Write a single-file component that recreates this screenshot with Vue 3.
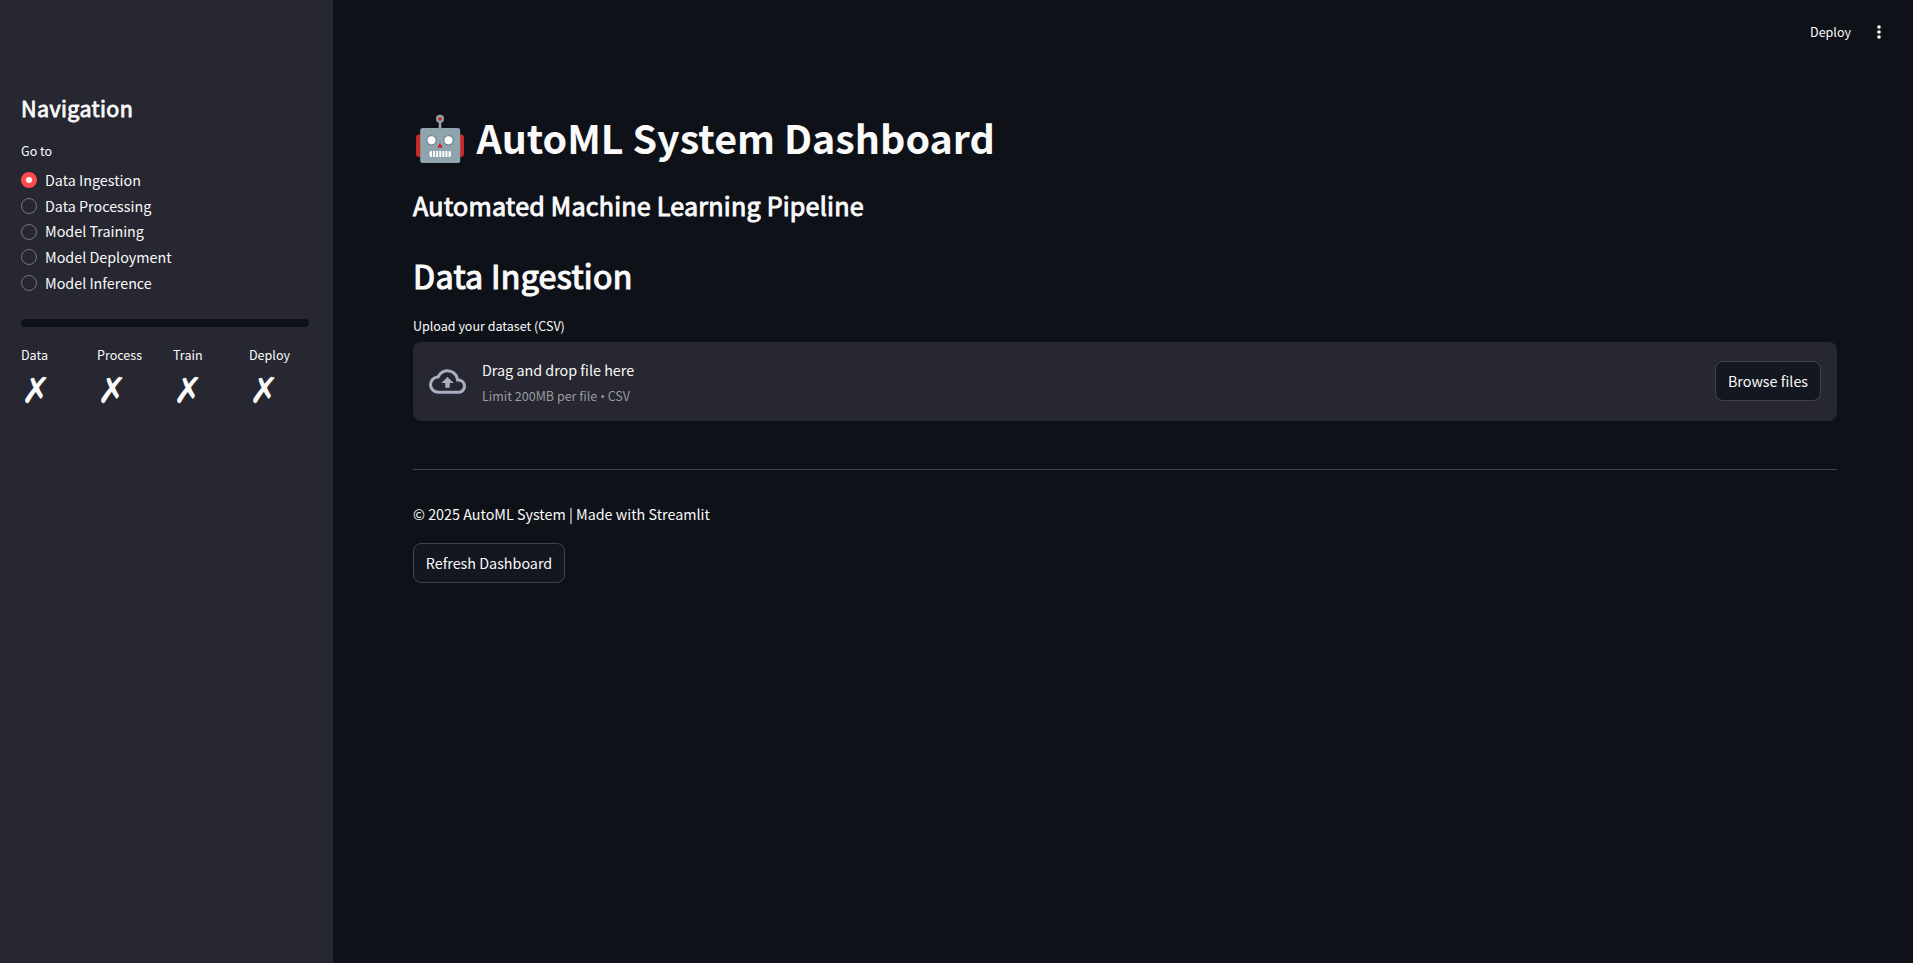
<script setup>
import { ref } from 'vue'
const pages = ['Data Ingestion', 'Data Processing', 'Model Training', 'Model Deployment', 'Model Inference']
const selected = ref('Data Ingestion')
const stages = ['Data', 'Process', 'Train', 'Deploy']
</script>

<template>
  <div class="app">
    <aside class="sidebar">
      <h2 class="nav-title">Navigation</h2>
      <p class="label goto">Go to</p>
      <div class="radios">
        <label v-for="p in pages" :key="p" class="radio" @click="selected = p">
          <span class="dot" :class="{ on: selected === p }"></span><span class="name">{{ p }}</span>
        </label>
      </div>
      <div class="progress"></div>
      <div class="metrics">
        <div v-for="s in stages" :key="s" class="metric">
          <div class="label">{{ s }}</div>
          <div class="mark">✗</div>
        </div>
      </div>
    </aside>
    <main class="main">
      <header class="toolbar">
        <span class="label deploy">Deploy</span>
        <svg class="dots" width="16" height="16" viewBox="0 0 16 16" fill="#fafafa"><circle cx="8" cy="3" r="1.8" /><circle cx="8" cy="8" r="1.8" /><circle cx="8" cy="13" r="1.8" /></svg>
      </header>
      <div class="content">
        <h1 class="title">
          <svg class="robot" width="50" height="50" viewBox="0 0 50 50">
            <path d="M25 7v8" stroke="#90a4ae" stroke-width="2.6" />
            <circle cx="25" cy="4.8" r="4" fill="#90a4ae" /><circle cx="25" cy="4.8" r="1.9" fill="#c62828" />
            <rect x="1" y="20.5" width="8" height="22.5" rx="3" fill="#c62828" /><rect x="41" y="20.5" width="8" height="22.5" rx="3" fill="#c62828" />
            <rect x="5.2" y="14" width="40" height="35" rx="2.5" fill="#90a4ae" />
            <circle cx="16.5" cy="26.3" r="4.7" fill="#fff" stroke="#6f7f87" stroke-width="1.2" />
            <circle cx="33.5" cy="26.3" r="4.7" fill="#fff" stroke="#6f7f87" stroke-width="1.2" />
            <path d="M25 28.8l2.8 5h-5.6z" fill="#c62828" />
            <rect x="14.5" y="37" width="21.5" height="6" rx="2" fill="#fff" />
            <path d="M17.6 37v6M20.6 37v6M23.7 37v6M26.8 37v6M29.9 37v6M33 37v6" stroke="#90a4ae" stroke-width="1.1" />
          </svg>
          <span>AutoML System Dashboard</span>
        </h1>
        <h3 class="subtitle">Automated Machine Learning Pipeline</h3>
        <h2 class="section">Data Ingestion</h2>
        <p class="label upload-label">Upload your dataset (CSV)</p>
        <section class="uploader">
          <svg class="cloud" width="37" height="37" viewBox="0 0 24 24" fill="#a9aec2"><path d="M19.35 10.04A7.49 7.49 0 0 0 12 4C9.11 4 6.6 5.64 5.35 8.04A5.994 5.994 0 0 0 0 14c0 3.31 2.69 6 6 6h13c2.76 0 5-2.24 5-5 0-2.64-2.05-4.78-4.65-4.96zM19 18H6c-2.21 0-4-1.79-4-4 0-2.05 1.53-3.76 3.56-3.97l1.07-.11.5-.95A5.469 5.469 0 0 1 12 6c2.62 0 4.88 1.86 5.39 4.43l.3 1.5 1.53.11A2.98 2.98 0 0 1 22 15c0 1.65-1.35 3-3 3zM8 13h2.55v3h2.9v-3H16l-4-4z" /></svg>
          <div class="hint">
            <div>Drag and drop file here</div>
            <div class="label limit">Limit 200MB per file <span class="bullet">•</span> CSV</div>
          </div>
          <button class="btn browse">Browse files</button>
        </section>
        <hr class="rule" />
        <p class="footer">© 2025 AutoML System | Made with Streamlit</p>
        <button class="btn refresh">Refresh Dashboard</button>
      </div>
    </main>
  </div>
</template>

<style>
body { margin: 0; background: #0e1117; }
</style>
<style scoped>
.app { display: flex; height: 963px; overflow: hidden; background: #0e1117; color: #fafafa; font: 14.34px/24px "Noto Sans CJK SC", "Noto Sans", sans-serif; }
h1, h2, h3, p { margin: 0; }
.sidebar { box-sizing: border-box; width: 333px; flex: none; padding: 93px 24px 0 21px; background: #262730; }
.label { font-size: 12.54px; line-height: 21px; }
.nav-title, .subtitle, .section { font-weight: 400; -webkit-text-stroke: 0.038em #fafafa; }
.nav-title { font-size: 21.5px; line-height: 29px; letter-spacing: 0.38px; }
.goto { margin-top: 18px; }
.radios { margin-top: 6px; }
.radio { display: flex; align-items: center; gap: 8px; height: 25.75px; line-height: 25.75px; }
.name { margin-bottom: 0.2px; }
.dot { box-sizing: border-box; width: 16px; height: 16px; margin-top: 0.3px; border-radius: 50%; border: 1px solid #75767f; background: #262730; }
.dot.on { border: 5px solid #ff4b4b; background: #fafafa; }
.progress { height: 8px; margin-top: 23.25px; border-radius: 4px; background: #0e1117; }
.metrics { display: flex; margin-top: 17px; }
.metric { width: 76px; flex: none; }
.mark { margin-top: 1px; font: 36px/50px "DejaVu Sans", sans-serif; }
.main { flex: 1; min-width: 0; }
.toolbar { height: 64px; display: flex; justify-content: flex-end; align-items: center; gap: 20px; padding-right: 26px; }
.deploy { margin-bottom: 2px; }
.content { padding: 46px 76px 0 80px; }
.title { display: flex; align-items: center; height: 53px; font-size: 39.4px; line-height: 53px; font-weight: 700; }
.robot { margin: 4px 11.5px 0 2px; }
.subtitle { margin-top: 25px; font-size: 25.1px; line-height: 34px; letter-spacing: 0.21px; }
.section { margin-top: 32px; font-size: 32.2px; line-height: 43px; letter-spacing: 0.3px; }
.upload-label { margin-top: 18px; }
.uploader { box-sizing: border-box; display: flex; align-items: flex-start; height: 79px; margin-top: 6px; padding: 0 16px; border-radius: 8px; background: #262730; }
.cloud { margin-top: 21px; }
.hint { flex: 1; margin: 16px 0 0 16px; }
.limit { margin-top: 3px; color: #9a9a9f; }
.bullet { font-family: "Open Sans", sans-serif; }
.btn { box-sizing: border-box; height: 40px; padding: 0; border: 1px solid #41444c; border-radius: 8px; background: #131720; color: #fafafa; font: inherit; }
.browse { width: 106px; margin-top: 19px; }
.rule { height: 1px; margin: 48px 0 0; border: 0; background: #414347; }
.footer { margin-top: 31px; line-height: 26px; }
.refresh { width: 152px; margin-top: 16px; }
</style>
